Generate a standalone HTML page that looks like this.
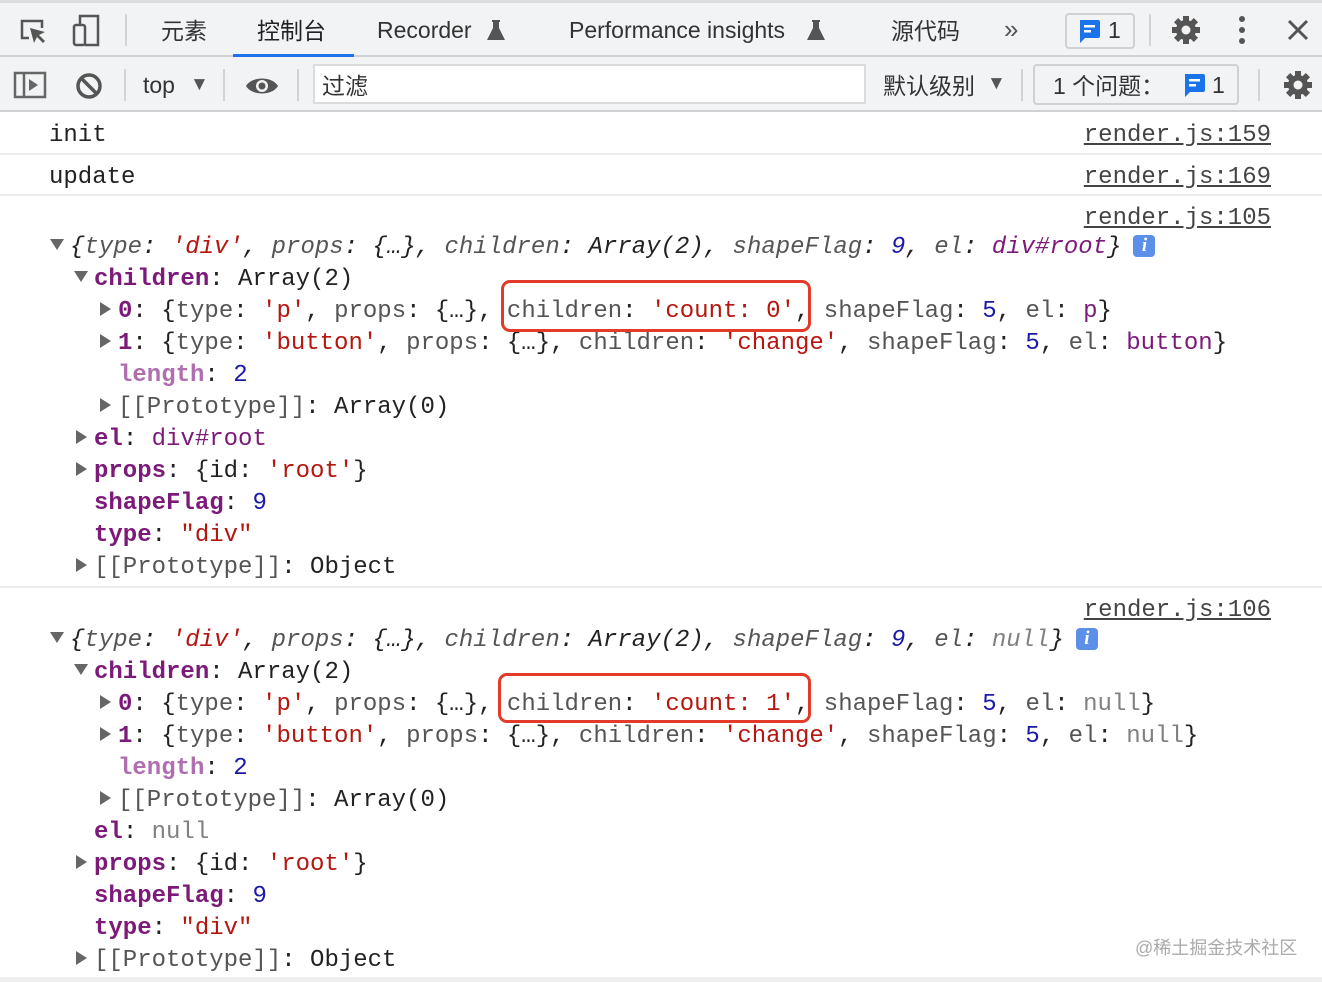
<!DOCTYPE html>
<html><head><meta charset="utf-8"><style>
*{margin:0;padding:0;box-sizing:border-box}
body{width:1322px;height:982px;background:#fff;position:relative;overflow:hidden;font-family:"Liberation Sans","Noto Sans CJK SC",sans-serif;}
.bar1{position:absolute;left:0;top:0;width:1322px;height:57px;background:#f1f3f4;border-top:3px solid #dadce0;border-bottom:2px solid #cfd1d4}
.bar2{position:absolute;left:0;top:57px;width:1322px;height:55px;background:#f1f3f4;border-bottom:2px solid #cfd1d4}
.t{position:absolute;font-size:23px;color:#333;white-space:nowrap}
.c{margin-top:-4px}
.sep{position:absolute;width:2px;background:#d3d3d3}
.m{position:absolute;font-family:"Liberation Mono","DejaVu Sans Mono",monospace;font-size:24px;line-height:32px;white-space:pre;color:#222;margin-top:3px}
.k{color:#7c1a79;font-weight:bold}
.kl{color:#b06eb0;font-weight:bold}
.s{color:#b5160f}
.n{color:#1a1aa6}
.g{color:#555}
.p{color:#7c1a79}
.nl{color:#808080}
.i{font-style:italic}
.tri{display:inline-block;width:0;height:0;vertical-align:middle}
.td{border-left:7px solid transparent;border-right:7px solid transparent;border-top:11px solid #666;margin-right:6px;position:relative;top:-2px}
.tr{border-top:7px solid transparent;border-bottom:7px solid transparent;border-left:11px solid #666;margin-right:7px;position:relative;top:-2px}
.hr{position:absolute;left:0;width:1322px;height:2px;background:#ececec}
.link{position:absolute;right:51px;font-family:"Liberation Mono",monospace;font-size:24px;line-height:32px;color:#444;text-decoration:underline;margin-top:3px}
.box{position:absolute;border:3px solid #e43a2a;border-radius:9px}
.info{display:inline-block;width:22px;height:22px;background:#5b8fe8;border-radius:4px;color:#fff;font:italic bold 19px "Liberation Serif",serif;text-align:center;line-height:22px;vertical-align:2px;margin-left:12px}
.dd{position:absolute;font-size:19px;color:#555}
</style></head><body>
<div class="bar1"></div>
<div class="bar2"></div>
<svg style="position:absolute;left:18px;top:16px" width="30" height="30" viewBox="0 0 30 30"><path d="M11 22H4V5h20v7" fill="none" stroke="#555" stroke-width="2.5"/><path d="M12 12l4 15 3-6 6 6 2-2-6-6 6-3z" fill="#555"/></svg>
<svg style="position:absolute;left:70px;top:13px" width="34" height="34" viewBox="0 0 34 34"><rect x="4" y="12" width="11" height="20" rx="2" fill="none" stroke="#555" stroke-width="2.5"/><path d="M10 12V3h18v29H15" fill="none" stroke="#555" stroke-width="2.5"/></svg>
<div class="sep" style="left:125px;top:14px;height:32px"></div>
<div class="t c" style="left:161px;top:16px">元素</div>
<div class="t c" style="left:257px;top:16px;color:#222">控制台</div>
<div style="position:absolute;left:233px;top:54px;width:121px;height:3px;background:#1a73e8"></div>
<div class="t" style="left:377px;top:17px">Recorder</div>
<svg style="position:absolute;left:486px;top:19px" width="20" height="22" viewBox="0 0 20 22"><path d="M6 1h8v2h-1v6l6 12H1L7 9V3H6z" fill="#555"/></svg>
<div class="t" style="left:569px;top:17px">Performance insights</div>
<svg style="position:absolute;left:806px;top:19px" width="20" height="22" viewBox="0 0 20 22"><path d="M6 1h8v2h-1v6l6 12H1L7 9V3H6z" fill="#555"/></svg>
<div class="t c" style="left:891px;top:16px">源代码</div>
<div class="t" style="left:1004px;top:14px;font-size:26px;color:#555">»</div>
<div style="position:absolute;left:1065px;top:13px;width:70px;height:36px;border:2px solid #cfd1d4;border-radius:4px;background:#f1f3f4"></div>
<svg style="position:absolute;left:1077px;top:19px" width="24" height="26" viewBox="0 0 24 26"><path d="M3 1h18a2 2 0 0 1 2 2v14a2 2 0 0 1-2 2H8l-5 5z" fill="#1a73e8"/><rect x="7" y="6" width="11" height="2.5" fill="#fff"/><rect x="7" y="11" width="7" height="2.5" fill="#fff"/></svg>
<div class="t" style="left:1108px;top:17px">1</div>
<div class="sep" style="left:1149px;top:14px;height:32px"></div>
<svg style="position:absolute;left:1170px;top:14px" width="32" height="32" viewBox="0 0 32 32"><g fill="#555"><circle cx="16" cy="16" r="10"/><rect x="13" y="2" width="6" height="28"/><rect x="13" y="2" width="6" height="28" transform="rotate(45 16 16)"/><rect x="13" y="2" width="6" height="28" transform="rotate(90 16 16)"/><rect x="13" y="2" width="6" height="28" transform="rotate(135 16 16)"/></g><circle cx="16" cy="16" r="4.5" fill="#f1f3f4"/></svg>
<svg style="position:absolute;left:1236px;top:15px" width="12" height="32"><circle cx="6" cy="4" r="3" fill="#555"/><circle cx="6" cy="15" r="3" fill="#555"/><circle cx="6" cy="26" r="3" fill="#555"/></svg>
<svg style="position:absolute;left:1286px;top:18px" width="24" height="24"><path d="M3 3L21 21M21 3L3 21" stroke="#555" stroke-width="3"/></svg>
<svg style="position:absolute;left:13px;top:71px" width="36" height="28" viewBox="0 0 36 28"><rect x="2" y="2" width="30" height="24" fill="none" stroke="#666" stroke-width="2.5"/><line x1="11" y1="2" x2="11" y2="26" stroke="#666" stroke-width="2.5"/><path d="M16 8l9 6-9 6z" fill="#666"/></svg>
<svg style="position:absolute;left:74px;top:71px" width="30" height="30" viewBox="0 0 30 30"><circle cx="15" cy="15" r="11" fill="none" stroke="#555" stroke-width="3.5"/><path d="M7 7l16 16" stroke="#555" stroke-width="3.5"/></svg>
<div class="sep" style="left:124px;top:69px;height:32px"></div>
<div class="t" style="left:143px;top:72px">top</div>
<div class="dd" style="left:190px;top:74px">▼</div>
<div class="sep" style="left:223px;top:69px;height:32px"></div>
<svg style="position:absolute;left:244px;top:74px" width="36" height="24" viewBox="0 0 36 24"><path d="M2 12C8 2 28 2 34 12 28 22 8 22 2 12z" fill="#555"/><circle cx="18" cy="12" r="6" fill="#f1f3f4"/><circle cx="18" cy="12" r="3.5" fill="#555"/></svg>
<div class="sep" style="left:297px;top:69px;height:32px"></div>
<div style="position:absolute;left:313px;top:64px;width:553px;height:40px;background:#fff;border:2px solid #dcdcdc"></div>
<div class="t c" style="left:322px;top:71px">过滤</div>
<div class="t c" style="left:883px;top:71px">默认级别</div>
<div class="dd" style="left:987px;top:73px">▼</div>
<div class="sep" style="left:1021px;top:69px;height:32px"></div>
<div style="position:absolute;left:1033px;top:64px;width:206px;height:41px;border:2px solid #cfd1d4;border-radius:4px"></div>
<div class="t c" style="left:1053px;top:71px">1 个问题：</div>
<svg style="position:absolute;left:1182px;top:73px" width="24" height="26" viewBox="0 0 24 26"><path d="M3 1h18a2 2 0 0 1 2 2v14a2 2 0 0 1-2 2H8l-5 5z" fill="#1a73e8"/><rect x="7" y="6" width="11" height="2.5" fill="#fff"/><rect x="7" y="11" width="7" height="2.5" fill="#fff"/></svg>
<div class="t" style="left:1212px;top:72px">1</div>
<div class="sep" style="left:1258px;top:69px;height:32px"></div>
<svg style="position:absolute;left:1282px;top:69px" width="32" height="32" viewBox="0 0 32 32"><g fill="#555"><circle cx="16" cy="16" r="10"/><rect x="13" y="2" width="6" height="28"/><rect x="13" y="2" width="6" height="28" transform="rotate(45 16 16)"/><rect x="13" y="2" width="6" height="28" transform="rotate(90 16 16)"/><rect x="13" y="2" width="6" height="28" transform="rotate(135 16 16)"/></g><circle cx="16" cy="16" r="4.5" fill="#f1f3f4"/></svg>

<div class="m" style="left:49px;top:117px">init</div>
<div class="link" style="top:117px">render.js:159</div>
<div class="hr" style="top:153px"></div>
<div class="m" style="left:49px;top:159px">update</div>
<div class="link" style="top:159px">render.js:169</div>
<div class="hr" style="top:194px"></div>
<div class="link" style="top:200px">render.js:105</div>

<div class="m" style="left:50px;top:229px"><span class="tri td"></span><span class="i">{<span class="g">type</span>: <span class="s">'div'</span>, <span class="g">props</span>: {…}, <span class="g">children</span>: Array(2), <span class="g">shapeFlag</span>: <span class="n">9</span>, <span class="g">el</span>: <span class="p">div#root</span>}</span><span class="info">i</span></div>
<div class="m" style="left:74px;top:261px"><span class="tri td"></span><span class="k">children</span>: Array(2)</div>
<div class="m" style="left:100px;top:293px"><span class="tri tr"></span><span class="k">0</span>: {<span class="g">type</span>: <span class="s">'p'</span>, <span class="g">props</span>: {…}, <span class="g">children</span>: <span class="s">'count: 0'</span>, <span class="g">shapeFlag</span>: <span class="n">5</span>, <span class="g">el</span>: <span class="p">p</span>}</div>
<div class="m" style="left:100px;top:325px"><span class="tri tr"></span><span class="k">1</span>: {<span class="g">type</span>: <span class="s">'button'</span>, <span class="g">props</span>: {…}, <span class="g">children</span>: <span class="s">'change'</span>, <span class="g">shapeFlag</span>: <span class="n">5</span>, <span class="g">el</span>: <span class="p">button</span>}</div>
<div class="m" style="left:118px;top:357px"><span class="kl">length</span>: <span class="n">2</span></div>
<div class="m" style="left:100px;top:389px"><span class="tri tr"></span><span class="g">[[Prototype]]</span>: Array(0)</div>
<div class="m" style="left:76px;top:421px"><span class="tri tr"></span><span class="k">el</span>: <span class="p">div#root</span></div>
<div class="m" style="left:76px;top:453px"><span class="tri tr"></span><span class="k">props</span>: {id: <span class="s">'root'</span>}</div>
<div class="m" style="left:94px;top:485px"><span class="k">shapeFlag</span>: <span class="n">9</span></div>
<div class="m" style="left:94px;top:517px"><span class="k">type</span>: <span class="s">"div"</span></div>
<div class="m" style="left:76px;top:549px"><span class="tri tr"></span><span class="g">[[Prototype]]</span>: Object</div>
<div class="box" style="left:501px;top:280px;width:310px;height:52px"></div>
<div class="hr" style="top:586px"></div>

<div class="link" style="top:592px">render.js:106</div>
<div class="m" style="left:50px;top:622px"><span class="tri td"></span><span class="i">{<span class="g">type</span>: <span class="s">'div'</span>, <span class="g">props</span>: {…}, <span class="g">children</span>: Array(2), <span class="g">shapeFlag</span>: <span class="n">9</span>, <span class="g">el</span>: <span class="nl">null</span>}</span><span class="info">i</span></div>
<div class="m" style="left:74px;top:654px"><span class="tri td"></span><span class="k">children</span>: Array(2)</div>
<div class="m" style="left:100px;top:686px"><span class="tri tr"></span><span class="k">0</span>: {<span class="g">type</span>: <span class="s">'p'</span>, <span class="g">props</span>: {…}, <span class="g">children</span>: <span class="s">'count: 1'</span>, <span class="g">shapeFlag</span>: <span class="n">5</span>, <span class="g">el</span>: <span class="nl">null</span>}</div>
<div class="m" style="left:100px;top:718px"><span class="tri tr"></span><span class="k">1</span>: {<span class="g">type</span>: <span class="s">'button'</span>, <span class="g">props</span>: {…}, <span class="g">children</span>: <span class="s">'change'</span>, <span class="g">shapeFlag</span>: <span class="n">5</span>, <span class="g">el</span>: <span class="nl">null</span>}</div>
<div class="m" style="left:118px;top:750px"><span class="kl">length</span>: <span class="n">2</span></div>
<div class="m" style="left:100px;top:782px"><span class="tri tr"></span><span class="g">[[Prototype]]</span>: Array(0)</div>
<div class="m" style="left:94px;top:814px"><span class="k">el</span>: <span class="nl">null</span></div>
<div class="m" style="left:76px;top:846px"><span class="tri tr"></span><span class="k">props</span>: {id: <span class="s">'root'</span>}</div>
<div class="m" style="left:94px;top:878px"><span class="k">shapeFlag</span>: <span class="n">9</span></div>
<div class="m" style="left:94px;top:910px"><span class="k">type</span>: <span class="s">"div"</span></div>
<div class="m" style="left:76px;top:942px"><span class="tri tr"></span><span class="g">[[Prototype]]</span>: Object</div>
<div class="box" style="left:498px;top:673px;width:313px;height:50px"></div>
<div class="hr" style="top:977px;height:5px;background:#efefef"></div>
<div style="position:absolute;left:1135px;top:934px;font-size:18px;color:#aaa;font-family:'Liberation Sans','Noto Sans CJK SC',sans-serif">@稀土掘金技术社区</div>
</body></html>
